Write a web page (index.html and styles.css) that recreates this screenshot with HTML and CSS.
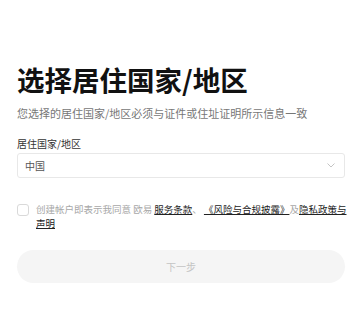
FILE: index.html
```html
<!DOCTYPE html>
<html lang="zh-CN">
<head>
    <meta charset="UTF-8">
    <meta name="viewport" content="width=device-width, initial-scale=1.0">
    <title>选择居住国家/地区</title>
    <link rel="stylesheet" href="styles.css">
</head>
<body>
    <div class="residence-page">
        <h1 class="page-title">选择居住国家/地区</h1>
        <p class="page-desc">您选择的居住国家/地区必须与证件或住址证明所示信息一致</p>

        <label class="field-label" for="country">居住国家/地区</label>
        <div class="select-box" id="country">
            <span class="select-value">中国</span>
            <svg class="chevron" width="8" height="5" viewBox="0 0 8 5">
                <path d="M0.5 0.5 L4 4 L7.5 0.5" fill="none" stroke="#bdbdbd" stroke-width="0.9"/>
            </svg>
        </div>

        <div class="agree-row">
            <span class="checkbox"></span>
            <p class="agree-text">创建帐户即表示我同意 欧易 <a href="#">服务条款</a>、 <a href="#">《风险与合规披露》</a>及<a href="#">隐私政策与声明</a></p>
        </div>

        <button class="next-btn" disabled>下一步</button>
    </div>
</body>
</html>
```

FILE: styles.css
```css
body {
    margin: 0;
    padding: 0;
    background: #fff;
    font-family: "Noto Sans CJK SC", "Noto Sans", sans-serif;
}

.residence-page {
    padding: 62px 16px 0 17px;
}

.page-title {
    margin: 0;
    font-size: 27.5px;
    line-height: 35px;
    font-weight: 700;
    color: #111;
}

.page-desc {
    margin: 8px 0 0;
    font-size: 11px;
    line-height: 16px;
    color: #777;
}

.field-label {
    display: block;
    margin-top: 16px;
    font-size: 10px;
    line-height: 14px;
    color: #333;
}

.select-box {
    margin-top: 2px;
    height: 25px;
    border: 1px solid #e8e8e8;
    border-radius: 3px;
    display: flex;
    align-items: center;
    justify-content: space-between;
    padding: 0 9px 0 7px;
    box-sizing: border-box;
}

.select-value {
    font-size: 10px;
    color: #555;
}

.agree-row {
    margin: 24px -10px 0 0;
    display: flex;
    gap: 7px;
    align-items: flex-start;
}

.checkbox {
    flex: none;
    width: 10px;
    height: 10px;
    margin-top: 2px;
    border: 1px solid #d9d9d9;
    border-radius: 3px;
}

.agree-text {
    margin: 0;
    font-size: 9.5px;
    line-height: 14px;
    color: #a8a8a8;
}

.agree-text a {
    color: #222;
    text-decoration: underline;
}

.next-btn {
    display: block;
    width: 100%;
    margin-top: 20px;
    height: 33px;
    border: none;
    border-radius: 17px;
    background: #f5f5f5;
    color: #c4c4c4;
    font-family: inherit;
    font-size: 10px;
}
```
